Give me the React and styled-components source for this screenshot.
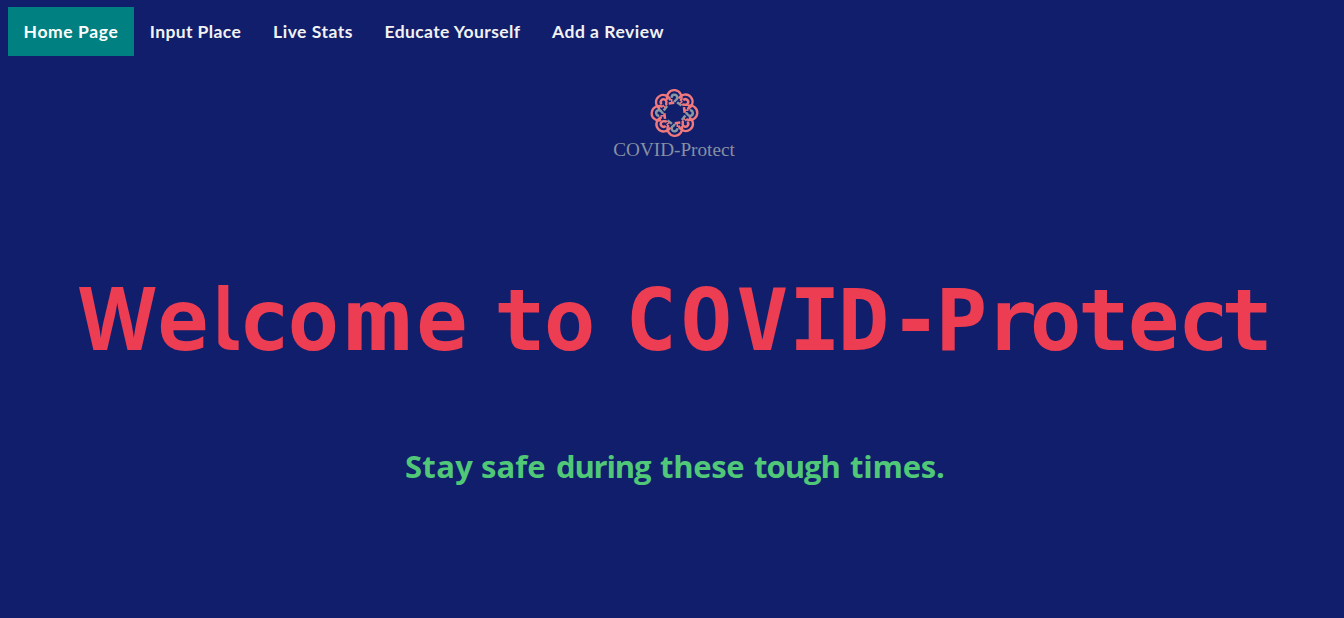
import React from "react";
import styled, { createGlobalStyle } from "styled-components";

const GlobalStyle = createGlobalStyle`
  body {
    margin: 0;
    background: #111e6c;
  }
`;

const Page = styled.div`
  min-height: 618px;
  box-sizing: border-box;
  padding: 7px 0 0 8px;
  background: #111e6c;
  overflow: hidden;
`;

const Nav = styled.nav`
  display: flex;
  height: 49px;
`;

const NavLink = styled.a`
  display: flex;
  align-items: center;
  justify-content: center;
  width: ${(p) => p.$width}px;
  letter-spacing: ${(p) => p.$tracking || 0}px;
  background: ${(p) => (p.$active ? "#008080" : "transparent")};
  color: ${(p) => (p.$active ? "#ffffff" : "#f2f2f2")};
  font: 700 17.5px "Lato", sans-serif;
  white-space: nowrap;
`;

const Brand = styled.div`
  display: flex;
  flex-direction: column;
  align-items: center;
  width: 122px;
  margin: 32px 0 0 605px;
`;

const Emblem = styled.svg`
  display: block;
  width: 50px;
  height: 50px;
`;

const BrandName = styled.div`
  font: 19.2px/24px "Liberation Serif", serif;
  color: #8790a2;
  white-space: nowrap;
`;

const Title = styled.h1`
  height: 120px;
  margin: 98px 0 0 67px;
  font: 700 86px/120px "DejaVu Sans Mono", monospace;
  color: #ec3d53;
  white-space: pre;
`;

const Glyph = styled.span`
  letter-spacing: ${(p) => p.$tracking}px;
`;

const WideW = styled(Glyph)`
  display: inline-block;
  font-family: "Open Sans", sans-serif;
  font-size: 88px;
  line-height: 100px;
  transform: scaleX(0.9);
`;

const WideM = styled.span`
  display: inline-block;
  margin: 0 ${(p) => p.$tracking - 1}px 0 ${(p) => p.$tracking - 1}px;
  line-height: 100px;
  transform: scaleX(1.32);
`;

const NarrowL = styled.span`
  display: inline-block;
  margin-right: ${(p) => p.$tracking}px;
  line-height: 100px;
  clip-path: inset(0 13px 0 18.5px);
`;

const Subtitle = styled.h2`
  display: flex;
  margin: 61px 0 0 397px;
  font: 700 31px/50px "Open Sans", sans-serif;
  color: #50c878;
  white-space: pre;
`;

const Word = styled.span`
  width: ${(p) => p.$width}px;
  letter-spacing: ${(p) => p.$tracking}px;
`;

const links = [
  ["Home Page", 126, 0.6],
  ["Input Place", 123, 0.4],
  ["Live Stats", 112, 0.5],
  ["Educate Yourself", 167, 0.4],
  ["Add a Review", 144, 0.5],
];

const letters = [
  ["W", -3, WideW], ["e", -9], ["l", -13.5, NarrowL], ["c", -2.5], ["o", 0],
  ["m", 13.5, WideM], ["e", -25.6], [" ", 0], ["t", -2], ["o", -22], [" ", 0],
  ["C", 3.5], ["O", 4.2], ["V", 0.7], ["I", -3], ["D", 0.2], ["-", -6], ["P", -2],
  ["r", -7.5], ["o", -3.5], ["t", -2], ["e", -2], ["c", -8], ["t", 0],
];

const words = [
  ["Stay ", 76, 0.3], ["safe ", 75, 0], ["during ", 104, -1.2],
  ["these ", 94, -0.3], ["tough ", 96, -1], ["times.", 100, -0.2],
];

const PINK = "#f0797d";
const GRAY = "#8798a4";

function KnotMark() {
  return (
    <Emblem viewBox="-25.5 -25 50 50" fill="none" strokeWidth="2.3">
      {[0, 45, 90, 135, 180, 225, 270, 315].map((angle, i) => (
        <g key={angle} transform={`rotate(${angle})`} stroke={i % 2 ? PINK : GRAY}>
          <path d="M-7.2 -13.2A7.3 7.3 0 1 1 6 -11.8" stroke={PINK} />
          <path
            d="M-2.8 -15.2A2.8 2.8 0 1 1 1.6 -13.2Q0 -12.5 0 -10.8"
            strokeWidth="2.5"
          />
          <path d="M2.6 -10.8L7 -7.4" strokeWidth="2.5" />
          <path d="M-2.8 -14V-10.2" stroke={PINK} strokeWidth="1.5" />
        </g>
      ))}
    </Emblem>
  );
}

export default function App() {
  return (
    <Page>
      <GlobalStyle />
      <Nav>
        {links.map(([label, width, tracking], i) => (
          <NavLink key={label} $width={width} $tracking={tracking} $active={i === 0}>
            {label}
          </NavLink>
        ))}
      </Nav>
      <Brand>
        <KnotMark />
        <BrandName>COVID-Protect</BrandName>
      </Brand>
      <Title>
        {letters.map(([char, tracking, Shape = Glyph], i) => (
          <Shape key={i} $tracking={tracking}>{char}</Shape>
        ))}
      </Title>
      <Subtitle>
        {words.map(([word, width, tracking]) => (
          <Word key={word} $width={width} $tracking={tracking}>{word}</Word>
        ))}
      </Subtitle>
    </Page>
  );
}
